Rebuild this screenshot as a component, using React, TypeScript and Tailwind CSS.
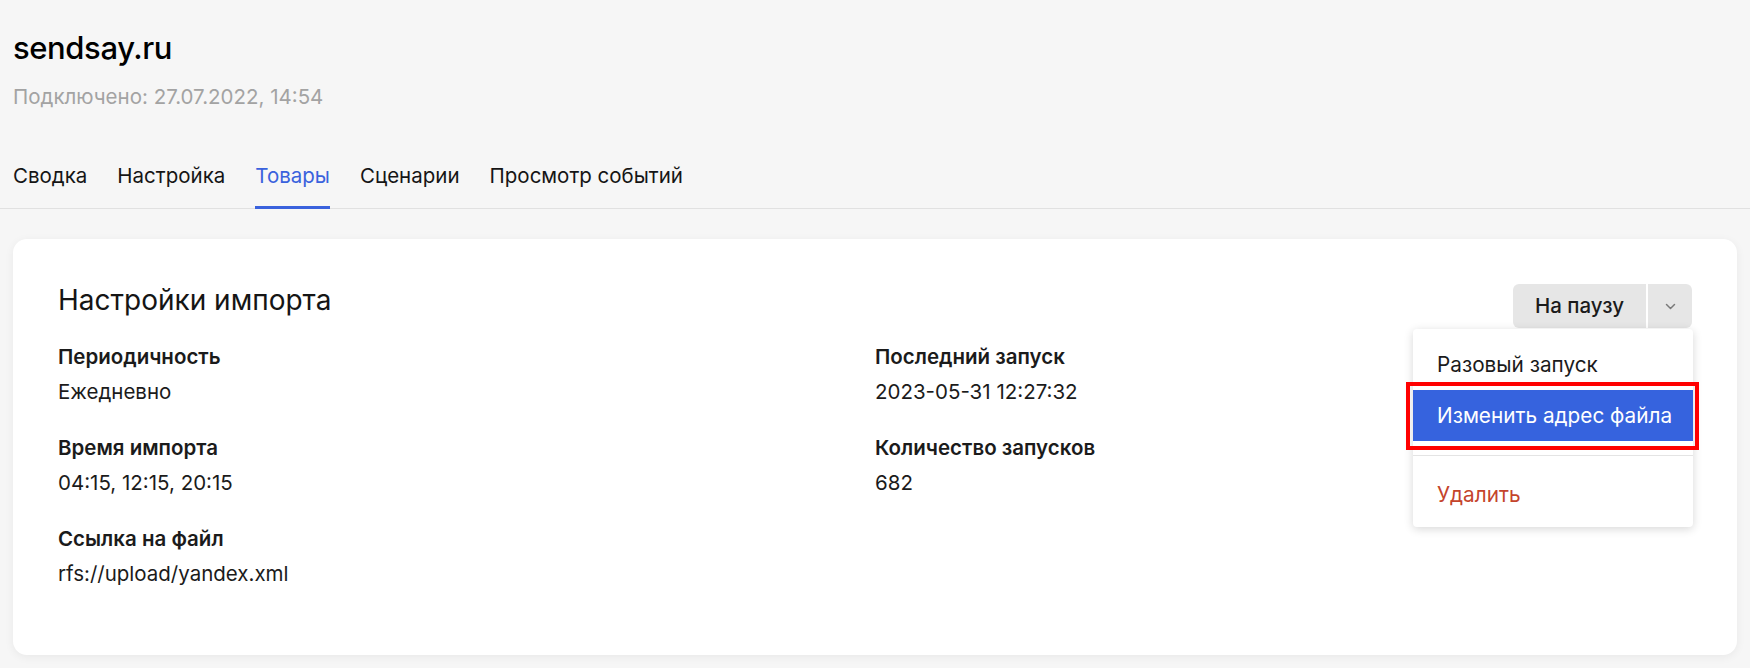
import React from 'react';

const tabs = ['Сводка', 'Настройка', 'Товары', 'Сценарии', 'Просмотр событий'];

const leftFields = [
  { label: 'Периодичность', value: 'Ежедневно' },
  { label: 'Время импорта', value: '04:15, 12:15, 20:15' },
  { label: 'Ссылка на файл', value: 'rfs://upload/yandex.xml' },
];

const rightFields = [
  { label: 'Последний запуск', value: '2023-05-31 12:27:32' },
  { label: 'Количество запусков', value: '682' },
];

const Field: React.FC<{ label: string; value: string }> = ({ label, value }) => (
  <div>
    <div className="text-[20.5px] leading-[26px] font-semibold text-[#1b1b1b]">{label}</div>
    <div className="mt-[9px] text-[20.5px] leading-[26px] text-[#1b1b1b]">{value}</div>
  </div>
);

export default function App() {
  return (
    <div className="min-h-[668px] bg-[#f6f6f6] pb-[12px] font-['Inter','Liberation_Sans',sans-serif] text-[#111]">
      {/* header */}
      <div className="px-[13px] pt-[30px]">
        <h1 className="text-[31px] leading-[36px] font-medium tracking-[-0.4px] text-black">sendsay.ru</h1>
        <div className="mt-[18px] text-[20.5px] leading-[26px] text-[#a3a3a3]">Подключено: 27.07.2022, 14:54</div>
      </div>

      <div className="mt-[53px] flex gap-[30px] border-b border-[#e1e1e1] px-[13px]">
        {tabs.map(t => (
          <div
            key={t}
            className={`-mb-px pb-[17px] border-b-[3px] text-[20.5px] leading-[26px] ${t === 'Товары' ? 'border-[#3a62dd] text-[#3a62dd]' : 'border-transparent text-[#151515]'}`}
          >
            {t}
          </div>
        ))}
      </div>

      {/* card */}
      <div className="mx-[13px] mt-[30px] rounded-[14px] bg-white px-[45px] pt-[45px] pb-[68px] shadow-[0_2px_10px_rgba(0,0,0,0.06)]">
        <div className="flex items-start justify-between">
          <h2 className="text-[28px] leading-[32px] text-[#151515]">Настройки импорта</h2>
          <div className="relative flex h-[44px]">
            <button className="rounded-l-[6px] bg-[#e6e6e6] px-[22px] text-[20.5px] font-medium text-[#1b1b1b]">На паузу</button>
            <button className="ml-[2px] flex w-[44px] items-center justify-center rounded-r-[6px] bg-[#e6e6e6]">
              <svg width="11" height="7" viewBox="0 0 11 7" fill="none">
                <path d="M1.5 1.5l4 4 4-4" stroke="#7a7a7a" strokeWidth="1.5" strokeLinecap="round" strokeLinejoin="round" />
              </svg>
            </button>

            {/* dropdown */}
            <div className="absolute right-[-1px] top-[45px] z-10 w-[280px] whitespace-nowrap rounded-[4px] bg-white pt-[10px] pb-[7px] shadow-[0_2px_10px_rgba(0,0,0,0.16)]">
              <div className="flex h-[51px] items-center px-[24px] text-[20.75px] text-[#1b1b1b]">Разовый запуск</div>
              <div className="relative flex h-[51px] items-center bg-[#3663de] pl-[24px] text-[20.75px] text-white">
                Изменить адрес файла
                <div className="pointer-events-none absolute -left-[7px] -right-[6px] -top-[8px] -bottom-[9px] border-4 border-[#ff0000]" />
              </div>
              <div className="mt-[14px] mb-[14px] h-px bg-[#e4e4e4]" />
              <div className="flex h-[50px] items-center px-[24px] text-[20.75px] text-[#c4442b]">Удалить</div>
            </div>
          </div>
        </div>

        <div className="mt-[16px] grid grid-cols-2">
          <div className="flex flex-col gap-[30px]">
            {leftFields.map(f => <Field key={f.label} {...f} />)}
          </div>
          <div className="flex flex-col gap-[30px]">
            {rightFields.map(f => <Field key={f.label} {...f} />)}
          </div>
        </div>
      </div>
    </div>
  );
}
